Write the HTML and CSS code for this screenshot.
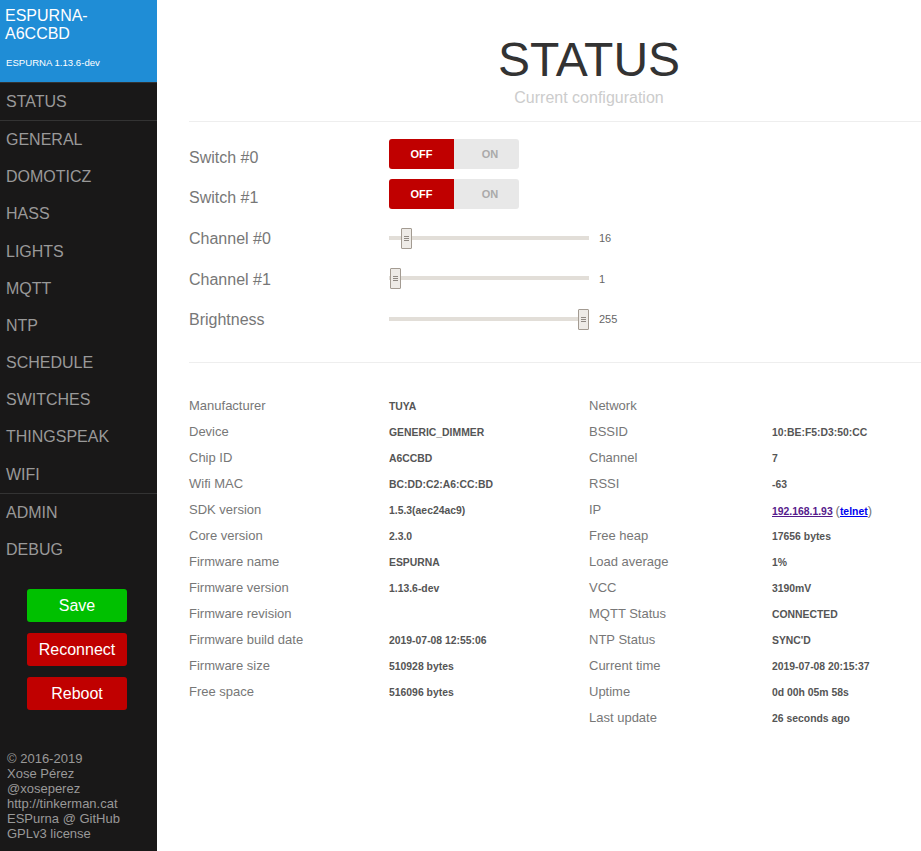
FILE: index.html
```html
<!DOCTYPE html>
<html lang="en">
<head>
    <meta charset="UTF-8">
    <meta name="viewport" content="width=device-width, initial-scale=1.0">
    <title>ESPURNA-A6CCBD - STATUS</title>
    <link rel="stylesheet" href="styles.css">
</head>
<body>
    <div class="layout">
        <div class="menu">
            <div class="menu-heading">
                <h1 class="hostname">ESPURNA-A6CCBD</h1>
                <h2 class="desc">ESPURNA 1.13.6-dev</h2>
            </div>
            <ul class="menu-list">
                <li><a href="#status">STATUS</a></li>
                <li class="separator"></li>
                <li><a href="#general">GENERAL</a></li>
                <li><a href="#domoticz">DOMOTICZ</a></li>
                <li><a href="#hass">HASS</a></li>
                <li><a href="#lights">LIGHTS</a></li>
                <li><a href="#mqtt">MQTT</a></li>
                <li><a href="#ntp">NTP</a></li>
                <li><a href="#schedule">SCHEDULE</a></li>
                <li><a href="#switches">SWITCHES</a></li>
                <li><a href="#thingspeak">THINGSPEAK</a></li>
                <li><a href="#wifi">WIFI</a></li>
                <li class="separator"></li>
                <li><a href="#admin">ADMIN</a></li>
                <li><a href="#debug">DEBUG</a></li>
            </ul>
            <div class="menu-buttons">
                <button class="button-save">Save</button>
                <button class="button-reconnect">Reconnect</button>
                <button class="button-reboot">Reboot</button>
            </div>
            <div class="footer">
                <div>&copy; 2016-2019</div>
                <div>Xose P&eacute;rez</div>
                <div><a href="#">@xoseperez</a></div>
                <div><a href="#">http://tinkerman.cat</a></div>
                <div><a href="#">ESPurna @ GitHub</a></div>
                <div>GPLv3 license</div>
            </div>
        </div>

        <div class="main">
            <div class="content">
                <div class="header">
                    <h1>STATUS</h1>
                    <h2>Current configuration</h2>
                </div>

                <div class="controls">
                    <div class="row toggle-row">
                        <label>Switch #0</label>
                        <div class="toggle">
                            <span class="toggle-off">OFF</span>
                            <span class="toggle-on">ON</span>
                        </div>
                    </div>
                    <div class="row toggle-row">
                        <label>Switch #1</label>
                        <div class="toggle">
                            <span class="toggle-off">OFF</span>
                            <span class="toggle-on">ON</span>
                        </div>
                    </div>
                    <div class="row slider-row first-slider" data-value="16">
                        <label>Channel #0</label>
                        <div class="slider"></div>
                        <span class="slider-value"></span>
                    </div>
                    <div class="row slider-row" data-value="1">
                        <label>Channel #1</label>
                        <div class="slider"></div>
                        <span class="slider-value"></span>
                    </div>
                    <div class="row slider-row" data-value="255">
                        <label>Brightness</label>
                        <div class="slider"></div>
                        <span class="slider-value"></span>
                    </div>
                </div>

                <div class="info">
                    <div class="info-col">
                        <div class="info-row"><label>Manufacturer</label><span>TUYA</span></div>
                        <div class="info-row"><label>Device</label><span>GENERIC_DIMMER</span></div>
                        <div class="info-row"><label>Chip ID</label><span>A6CCBD</span></div>
                        <div class="info-row"><label>Wifi MAC</label><span>BC:DD:C2:A6:CC:BD</span></div>
                        <div class="info-row"><label>SDK version</label><span>1.5.3(aec24ac9)</span></div>
                        <div class="info-row"><label>Core version</label><span>2.3.0</span></div>
                        <div class="info-row"><label>Firmware name</label><span>ESPURNA</span></div>
                        <div class="info-row"><label>Firmware version</label><span>1.13.6-dev</span></div>
                        <div class="info-row"><label>Firmware revision</label><span></span></div>
                        <div class="info-row"><label>Firmware build date</label><span>2019-07-08 12:55:06</span></div>
                        <div class="info-row"><label>Firmware size</label><span>510928 bytes</span></div>
                        <div class="info-row"><label>Free space</label><span>516096 bytes</span></div>
                    </div>
                    <div class="info-col right">
                        <div class="info-row"><label>Network</label><span></span></div>
                        <div class="info-row"><label>BSSID</label><span>10:BE:F5:D3:50:CC</span></div>
                        <div class="info-row"><label>Channel</label><span>7</span></div>
                        <div class="info-row"><label>RSSI</label><span>-63</span></div>
                        <div class="info-row"><label>IP</label><span><a href="#" class="visited">192.168.1.93</a> <span class="paren">(</span><a href="#">telnet</a><span class="paren">)</span></span></div>
                        <div class="info-row"><label>Free heap</label><span>17656 bytes</span></div>
                        <div class="info-row"><label>Load average</label><span>1%</span></div>
                        <div class="info-row"><label>VCC</label><span>3190mV</span></div>
                        <div class="info-row"><label>MQTT Status</label><span>CONNECTED</span></div>
                        <div class="info-row"><label>NTP Status</label><span>SYNC'D</span></div>
                        <div class="info-row"><label>Current time</label><span>2019-07-08 20:15:37</span></div>
                        <div class="info-row"><label>Uptime</label><span>0d 00h 05m 58s</span></div>
                        <div class="info-row"><label>Last update</label><span>26 seconds ago</span></div>
                    </div>
                </div>
            </div>
        </div>
    </div>

    <script>
        document.addEventListener("DOMContentLoaded", () => {
            // handle travel is track width minus handle width
            const travel = 189;
            document.querySelectorAll('.slider-row').forEach(row => {
                const value = parseInt(row.dataset.value, 10);
                const slider = row.querySelector('.slider');
                const handle = document.createElement('div');
                handle.className = 'slider-handle';
                handle.style.left = Math.round(travel * value / 255) + 'px';
                handle.innerHTML = '<svg width="9" height="19" viewBox="0 0 9 19">' +
                    '<path d="M2 7.5h5M2 9.5h5M2 11.5h5" stroke="#8f8983" stroke-width="1"/></svg>';
                slider.appendChild(handle);
                row.querySelector('.slider-value').textContent = value;
            });
        });
    </script>
</body>
</html>
```

FILE: styles.css
```css
body {
    font-family: "Liberation Sans", Arial, sans-serif;
    margin: 0;
    padding: 0;
    background-color: #fff;
    color: #777;
}
.layout {
    display: flex;
    height: 100vh;
    overflow: hidden;
}

/* side menu */
.menu {
    width: 157px;
    flex-shrink: 0;
    background-color: #191818;
    display: flex;
    flex-direction: column;
}
.menu-heading {
    background-color: #1f8dd6;
    color: #fff;
    padding: 7px 5px 14px;
    border-bottom: 1px solid #333;
}
.menu-heading .hostname {
    margin: 0;
    font-size: 16px;
    line-height: 18px;
    font-weight: normal;
}
.menu-heading .desc {
    margin: 14px 0 0 1px;
    font-size: 9.6px;
    line-height: 11px;
    font-weight: normal;
}
.menu-list {
    list-style: none;
    margin: 0;
    padding: 0;
}
.menu-list a {
    display: block;
    color: #999;
    text-decoration: none;
    font-size: 16px;
    line-height: 21.15px;
    padding: 8px 6px;
}
.menu-list .separator {
    height: 1px;
    background-color: #333;
}
.menu-buttons {
    display: flex;
    flex-direction: column;
    gap: 11px;
    padding: 21px 0 0 27px;
}
.menu-buttons button {
    width: 100px;
    height: 33px;
    border: none;
    border-radius: 3px;
    color: #fff;
    font-family: "Liberation Sans", Arial, sans-serif;
    font-size: 16px;
    cursor: pointer;
}
.button-save {
    background-color: #00c000;
}
.button-reconnect,
.button-reboot {
    background-color: #c00000;
}
.footer {
    margin-top: auto;
    padding: 0 0 10px 7px;
    font-size: 13px;
    color: #999;
}
.footer a {
    color: #999;
    text-decoration: none;
}

/* main area */
.main {
    flex: 1;
    overflow: hidden;
}
.content {
    width: 800px;
    margin-left: 32px;
}
.header {
    text-align: center;
    padding: 32px 0 14px;
    border-bottom: 1px solid #eee;
}
.header h1 {
    margin: 0;
    font-size: 48px;
    line-height: 55px;
    font-weight: normal;
    color: #333;
}
.header h2 {
    margin: 2px 0 0;
    font-size: 16px;
    line-height: 18px;
    font-weight: normal;
    color: #ccc;
}

.controls {
    padding-top: 12px;
}
.row {
    display: flex;
    align-items: center;
    height: 40px;
}
.row label {
    width: 200px;
    font-size: 16px;
    color: #777;
}
.toggle-row label {
    padding-top: 7px;
}
.slider-row {
    height: 40.5px;
}
.slider-row label {
    padding-top: 2px;
}
.first-slider {
    margin-top: 4px;
}
.toggle {
    display: flex;
    width: 130px;
    height: 30px;
    border-radius: 3px;
    overflow: hidden;
    font-size: 11px;
    font-weight: bold;
}
.toggle span {
    width: 65px;
    display: flex;
    align-items: center;
    justify-content: center;
}
.toggle-off {
    background-color: #c00000;
    color: #fff;
}
.toggle-on {
    background-color: #e8e8e8;
    color: #aaa;
    padding-left: 7px;
    box-sizing: border-box;
}
.slider {
    position: relative;
    width: 200px;
    height: 21px;
}
.slider::before {
    content: "";
    position: absolute;
    left: 0;
    right: 0;
    top: 8px;
    height: 4px;
    background-color: #e2ded8;
}
.slider-handle {
    position: absolute;
    top: 0;
    width: 9px;
    height: 19px;
    border: 1px solid #a39b92;
    border-radius: 1px;
    background-color: #eeebe7;
}
.slider-handle svg {
    display: block;
}
.slider-value {
    margin-left: 10px;
    font-size: 11px;
    color: #666;
}

.info {
    display: grid;
    grid-template-columns: 400px 400px;
    margin-top: 22px;
    padding-top: 30px;
    border-top: 1px solid #eee;
}
.info-row {
    display: flex;
    align-items: center;
    height: 26px;
}
.info-row label {
    width: 200px;
    flex-shrink: 0;
    font-size: 13px;
    color: #777;
}
.info-col.right .info-row label {
    width: 183px;
}
.info-row span {
    font-size: 10.4px;
    font-weight: bold;
    color: #555;
    padding-top: 2px;
}
.info-row a {
    color: #0000ee;
}
.info-row a.visited {
    color: #551a8b;
}
.info-row .paren {
    font-weight: normal;
    font-size: 13px;
    color: #777;
    padding-top: 0;
}
```
